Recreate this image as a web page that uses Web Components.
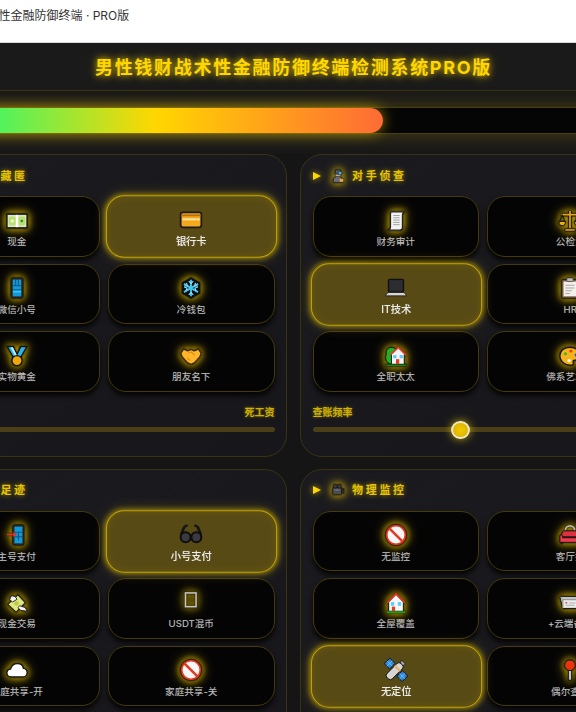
<!DOCTYPE html>
<html lang="zh">
<head>
<meta charset="utf-8">
<title>男性金融防御终端 · PRO版</title>
<style>
html,body{margin:0;padding:0;height:712px;overflow:hidden;background:#161616}
body{font-family:Inter,"Noto Sans CJK SC",sans-serif}
</style>
</head>
<body>
<fin-app>
  <fin-topbar slot="top">男性金融防御终端 · PRO版</fin-topbar>
  <fin-heading>男性钱财战术性金融防御终端检测系统PRO版</fin-heading>
  <fin-progress value="62.2"></fin-progress>
  <fin-grid>
    <fin-card heading="资金藏匿" icon="money">
      <fin-opt icon="cash">现金</fin-opt>
      <fin-opt icon="card" selected>银行卡</fin-opt>
      <fin-opt icon="phone">微信小号</fin-opt>
      <fin-opt icon="snow">冷钱包</fin-opt>
      <fin-opt icon="medal">实物黄金</fin-opt>
      <fin-opt icon="shake">朋友名下</fin-opt>
      <fin-slider slot="foot" label="隐藏比例" value="死工资" pos="0"></fin-slider>
    </fin-card>
    <fin-card heading="对手侦查" icon="spy">
      <fin-opt icon="scroll">财务审计</fin-opt>
      <fin-opt icon="scales">公检法</fin-opt>
      <fin-opt icon="laptop" selected>IT技术</fin-opt>
      <fin-opt icon="clip">HR</fin-opt>
      <fin-opt icon="garden">全职太太</fin-opt>
      <fin-opt icon="palette">佛系艺术家</fin-opt>
      <fin-slider slot="foot" label="查账频率" value="每月" pos="43.3"></fin-slider>
    </fin-card>
    <fin-card heading="消费足迹" icon="money">
      <fin-opt icon="phonein">主号支付</fin-opt>
      <fin-opt icon="shades" selected>小号支付</fin-opt>
      <fin-opt icon="wings">现金交易</fin-opt>
      <fin-opt icon="tofu">USDT混币</fin-opt>
      <fin-opt icon="cloud">家庭共享-开</fin-opt>
      <fin-opt icon="ban">家庭共享-关</fin-opt>
    </fin-card>
    <fin-card heading="物理监控" icon="cam">
      <fin-opt icon="ban">无监控</fin-opt>
      <fin-opt icon="couch">客厅摄</fin-opt>
      <fin-opt icon="house">全屋覆盖</fin-opt>
      <fin-opt icon="server">+云端备份</fin-opt>
      <fin-opt icon="sat" selected>无定位</fin-opt>
      <fin-opt icon="pin">偶尔查岗</fin-opt>
    </fin-card>
  </fin-grid>
</fin-app>
<script>
const ICONS = {
  money:'<rect x="2" y="6" width="20" height="12" fill="#7c6" stroke="#111" stroke-width="1.5"/>',
  cash:'<rect x="1" y="4.5" width="22" height="15" fill="#dfe6c4" stroke="#1a1a1a" stroke-width="1.6"/><rect x="3" y="7" width="7.5" height="10" rx="2" fill="#b8e070"/><rect x="13.500" y="7" width="7.5" height="10" rx="2" fill="#b8e070"/><rect x="10.800" y="5.300" width="2.400" height="13.400" fill="#fff"/><circle cx="6.800" cy="12" r="1.800" fill="#eef6cc"/><circle cx="17.200" cy="12" r="1.400" fill="#1f8a2c"/>',
  card:'<rect x="1" y="4" width="22" height="16" rx="2.400" fill="#f4a81c" stroke="#1a1a1a" stroke-width="1.800"/><rect x="2" y="6.200" width="20" height="2" fill="#b9710f"/><rect x="3" y="10.500" width="15" height="2" fill="#ffe9ae"/><rect x="18.500" y="10.500" width="2.500" height="2" fill="#fff3d0"/>',
  phone:'<rect x="5.500" y="1" width="13" height="22" rx="2" fill="#2e3136" stroke="#111" stroke-width="1"/><rect x="7.500" y="3" width="9" height="18" fill="#0f9bd8"/><path d="M7.500 9.500h9M7.500 14h9M10.500 3v6.500M13.500 3v6.500" stroke="#0a4f78" stroke-width="1"/><rect x="7.500" y="15" width="9" height="2" fill="#35c7f5"/>',
  phonein:'<rect x="7.500" y="1" width="12" height="22" rx="2" fill="#2e3136" stroke="#111" stroke-width="1"/><rect x="9.300" y="3" width="8.500" height="18" fill="#0f9bd8"/><path d="M9.300 9h8.500M9.300 14h8.500M13.500 9v9" stroke="#0a4f78" stroke-width="1"/><path d="M1 11.500h8" stroke="#e0312a" stroke-width="1.800"/><path d="M8 8.500l4 3-4 3z" fill="#e0312a"/>',
  snow:'<path d="M12 .8l9.600 5.600v11.200L12 23.200 2.400 17.600V6.400z" fill="#0b0f14" stroke="#111"/><path d="M12 3v18M4.300 7.500l15.400 9M19.700 7.500l-15.400 9" stroke="#45c8ee" stroke-width="2"/><path d="M9.500 4.500L12 7l2.500-2.500M9.500 19.500L12 17l2.500 2.500M4.500 11l3.200 1-1 3M19.500 11l-3.200 1 1 3M4.600 9.800l3.300-.3-.8-3M19.400 9.800l-3.300-.3.800-3" stroke="#8be4fa" stroke-width="1.200" fill="none"/>',
  medal:'<path d="M.5 1h8l3.500 8 3.500-8h8L16 15H8z" fill="#111"/><path d="M2.500 2.500h5l4.500 9.500 4.500-9.500h5l-6.500 11.500H9z" fill="#2cb4ee"/><path d="M5 2.500h2.500l4.500 9-1.200 2z" fill="#bfeeff"/><circle cx="12" cy="17" r="6.200" fill="#111"/><circle cx="12" cy="17" r="4.800" fill="#f0a808"/>',
  shake:'<path d="M4 4.500l4.500 2L12 5l3.500 1.500L20 4.500l3 4.500-1.500 4-6 6.500-3.500 1.500-3.500-1.500-6-6.500L1 9z" fill="#fdb62c" stroke="#3a2500" stroke-width="1.200" stroke-linejoin="round"/><path d="M9 9l3-1.500 4 3.500M8 14l3 3" stroke="#e68a00" stroke-width="1.200" fill="none"/>',
  spy:'<path d="M8 1.500l8 0 1 7H7z" fill="#5a5a66" stroke="#111"/><rect x="5" y="7.500" width="14" height="2" fill="#44444e"/><rect x="8" y="9.500" width="8" height="4" fill="#c9a38a"/><path d="M4 23v-4c0-4 3-6 8-6s8 2 8 6v4z" fill="#6d6d78" stroke="#111"/><circle cx="15.500" cy="7" r="3.200" fill="#3db6e8" stroke="#222"/><rect x="15" y="17" width="6" height="5" fill="#e9a63a"/>',
  scroll:'<path d="M7 2h14c-1.500 1-2 2-2 3.500V19c0 2-1 3-3 3H3c2-.5 3-2 3-3.500V5c0-2 .3-3 1-3z" fill="#f2f2f2" stroke="#222" stroke-width="1.300" stroke-linejoin="round"/><path d="M9 6h7M9 8.500h7M9 11h7M9 13.500h7M9 16h7" stroke="#9a9a9a" stroke-width="1"/>',
  scales:'<path d="M12 1v19M2.500 5h19" stroke="#111" stroke-width="3.600"/><path d="M12 1v19M2.500 5h19" stroke="#e9a80e" stroke-width="1.800"/><path d="M6.500 20.500h11v2.500h-11z" fill="#f0b010" stroke="#111" stroke-width=".8"/><path d="M3.500 5L.5 13M3.500 5l3 8M20.500 5l-3 8M20.500 5l3 8" fill="none" stroke="#111" stroke-width="1"/><path d="M0 12.500h7c0 3.500-1.500 4.500-3.500 4.500S0 16 0 12.500zM17 12.500h7c0 3.500-1.500 4.500-3.500 4.500S17 16 17 12.500z" fill="#f0b010" stroke="#111"/>',
  laptop:'<rect x="4" y="3" width="16" height="13.500" rx="1.300" fill="#27292e" stroke="#111" stroke-width="1.400"/><rect x="5.500" y="4.500" width="13" height="10.500" fill="#2c2d31"/><path d="M3.500 17h17l3 3.500H.5z" fill="#d8d8d8" stroke="#111" stroke-width=".8"/>',
  clip:'<rect x="3" y="3" width="18" height="20" rx="1" fill="#8d6a50" stroke="#111" stroke-width="1"/><rect x="5" y="5" width="14" height="16" fill="#f4f1e9"/><path d="M7 9h10M7 12h10M7 15h7M7 18h5" stroke="#a8a8a8" stroke-width="1.300"/><rect x="8.500" y="1" width="7" height="4" rx="1" fill="#bbb" stroke="#333" stroke-width=".7"/>',
  garden:'<path d="M8 2.500C3 2.500 .5 6 1.500 10-.5 14 1 20 7 21h5V4z" fill="#22b028" stroke="#111"/><path d="M6 10.500L14.500 2.500l8 8H21v10.500H7V10.500z" fill="#f4f4f4" stroke="#111" stroke-linejoin="round"/><path d="M5.500 11L14.500 2.500l8.500 8.500" fill="none" stroke="#e53a24" stroke-width="1.800"/><rect x="9" y="11" width="3.500" height="3.500" fill="#58d0f8"/><rect x="16" y="11" width="3.500" height="3.500" fill="#58d0f8"/><rect x="12" y="15.500" width="3.500" height="5.500" fill="#e53a24"/><rect x="1" y="21" width="22" height="2" fill="#1a9e20" stroke="#111" stroke-width=".5"/>',
  palette:'<path d="M12 2.500c6 0 11 3.500 11 8 0 4-2 6-5.500 6-2.500 0-2.500 1.500-2 3 .6 2-1 2.500-3.500 2.500C7 22 1 18 1 11.500 1 6 6 2.500 12 2.500z" fill="#f6b21b" stroke="#111" stroke-width="1.300"/><circle cx="7" cy="9.500" r="1.700" fill="#39b52b"/><circle cx="13" cy="6.500" r="1.700" fill="#e8401f"/><circle cx="19" cy="11" r="2" fill="#1e58e0"/><circle cx="11" cy="17" r="1.800" fill="#fff"/>',
  shades:'<path d="M5 3L1.500 12M19 3l3.500 9" stroke="#161616" stroke-width="3" fill="none"/><path d="M5 3l3.500-1M19 3l-3.500-1" stroke="#161616" stroke-width="2.600"/><path d="M10 13h4" stroke="#161616" stroke-width="2.600"/><circle cx="6.300" cy="14.500" r="5.300" fill="#3a3a3e" stroke="#0e0e0e" stroke-width="2.200"/><circle cx="17.700" cy="14.500" r="5.300" fill="#3a3a3e" stroke="#0e0e0e" stroke-width="2.200"/>',
  wings:'<path d="M2 13.500L13 3l8 8.500L11 22z" fill="#dfe87a" stroke="#222" stroke-width="1.200" stroke-linejoin="round"/><path d="M6 4l4 1 2 3-5 3-3-3zM15 15l6 2 2 4-7-1-3-3z" fill="#f4f4f4" stroke="#222" stroke-width="1"/><circle cx="11.500" cy="12.500" r="2.500" fill="#b7c94e"/>',
  tofu:'<rect x="6" y="1" width="11.500" height="15" fill="none" stroke="#c4c4c4" stroke-width="1.700"/>',
  cloud:'<path d="M6 19.500c-3 0-5-2-5-4.300 0-2.400 1.700-4 4-4.200C6 7.500 9 5 12.500 5c3.400 0 6 2.200 6.500 5.400 2.500.3 4 2.300 4 4.500 0 2.500-2 4.600-5 4.600z" fill="#fff" stroke="#111" stroke-width="1.300"/>',
  ban:'<circle cx="12" cy="12" r="10.400" fill="#f6f6f6" stroke="#e23a22" stroke-width="2.400"/><circle cx="12" cy="12" r="11.600" fill="none" stroke="#111" stroke-width=".8"/><path d="M5 5l14 14" stroke="#e23a22" stroke-width="2.800"/>',
  cam:'<rect x="3" y="8" width="15" height="12" rx="1.500" fill="#4b4b50" stroke="#111"/><circle cx="7.500" cy="5.500" r="3.500" fill="#3a3a3e" stroke="#111"/><circle cx="14.500" cy="5.500" r="3.500" fill="#3a3a3e" stroke="#111"/><path d="M18 11l4-2v9l-4-2z" fill="#333" stroke="#111"/><rect x="6" y="11" width="9" height="2" fill="#77777d"/>',
  couch:'<path d="M7 7a5 5 0 0 1 10 0" fill="none" stroke="#b8b8b8" stroke-width="1.800"/><path d="M3 12c0-3 1-4.500 3-4.500h12c2 0 3 1.500 3 4.500v2H3z" fill="#e0303f" stroke="#111" stroke-width="1"/><path d="M1 12.500c1.500-1 3-.5 3 1.500v1h16v-1c0-2 1.500-2.500 3-1.500V20H1z" fill="#ee3c4e" stroke="#111" stroke-width="1"/><path d="M3 20v2M21 20v2" stroke="#111" stroke-width="1.500"/>',
  house:'<path d="M4 11L12 2.500 20 11v10H4z" fill="#f6f6f6" stroke="#111" stroke-linejoin="round"/><path d="M2.500 11.500L12 2l9.500 9.500" fill="none" stroke="#e03a24" stroke-width="1.900"/><rect x="6.500" y="11" width="3.500" height="4" fill="#58d0f8"/><rect x="14" y="11" width="3.500" height="4" fill="#58d0f8"/><rect x="7.500" y="16" width="3.500" height="5" fill="#e03a24"/><rect x="2" y="21" width="20" height="2" fill="#1a9e20"/>',
  server:'<path d="M1 5h20l2 3v10H4z" fill="#d0d0d0" stroke="#111" stroke-linejoin="round"/><path d="M1 5l3 3h19M4 8v10" fill="none" stroke="#888" stroke-width="1"/><rect x="5.500" y="9.500" width="16" height="7" fill="#ececec"/><rect x="7" y="11" width="2" height="1.500" fill="#e03a24"/><path d="M11 12h7M7 14.500h10" stroke="#aaa" stroke-width="1"/>',
  sat:'<g transform="rotate(-45 12 12)"><rect x="7.800" y="-1.500" width="8.400" height="8" fill="#2c86dc" stroke="#111"/><path d="M12-1.500v8M7.800 2.500h8.400" stroke="#8cc8f4" stroke-width=".8"/><rect x="7.800" y="17.500" width="8.400" height="8" fill="#2c86dc" stroke="#111"/><path d="M12 17.500v8M7.800 21.500h8.400" stroke="#8cc8f4" stroke-width=".8"/><rect x="-.5" y="8" width="21" height="8" rx="3" fill="#d6d6d6" stroke="#111"/><rect x="13" y="8" width="2.500" height="8" fill="#e8b070"/><path d="M20.500 10l3-1v6l-3-1z" fill="#aaa" stroke="#111" stroke-width=".7"/></g>',
  pin:'<rect x="10.500" y="10" width="3" height="13" fill="#c2c2c2" stroke="#111" stroke-width=".8"/><circle cx="12" cy="6.800" r="5.800" fill="#e8350f" stroke="#111"/>'
};

function def(name, css, html){
  customElements.define(name, class extends HTMLElement{
    constructor(){
      super();
      const r = this.attachShadow({mode:'open'});
      r.innerHTML = '<style>'+css+'</style>'+(typeof html==='function'?html(this):html);
    }
  });
}

def('fin-icon', `
  :host{display:block;width:var(--icon,22px);height:var(--icon,22px);filter:drop-shadow(0 0 1px rgba(0,0,0,.9)) drop-shadow(0 0 3px rgba(255,215,0,.85)) drop-shadow(0 0 6px rgba(255,215,0,.45))}
  svg{display:block;width:100%;height:100%;overflow:visible}
`, el => '<svg viewBox="0 0 24 24" aria-hidden="true">'+(ICONS[el.getAttribute('name')]||'')+'</svg>');

def('fin-app', `
  :host{display:block;width:745px;margin-left:-79px;background:#151515;min-height:712px}
  main{display:flex;flex-direction:column}
`, '<slot name="top"></slot><main><slot></slot></main>');

def('fin-topbar', `
  :host{display:block;box-sizing:border-box;height:43px;background:#fff;border-bottom:1px solid #d9d9d9;padding:8px 0 0 65.500px;font:12px/15px Inter,"Noto Sans CJK SC",sans-serif;color:#333}
`, '<slot></slot>');

def('fin-heading', `
  :host{display:block;box-sizing:border-box;height:48px;background:#1a1a1a;border-bottom:1px solid #3a3110;text-align:center;padding-top:11px;
    font:700 18px/28px Inter,"Noto Sans CJK SC",sans-serif;letter-spacing:1.700px;color:#ffd700;text-shadow:0 0 6px rgba(255,215,0,.8),0 0 12px rgba(255,215,0,.4)}
`, '<slot></slot>');

def('fin-progress', `
  :host{display:block;padding:15.500px 6px 20.500px;background:#181818}
  .track{height:27px;background:#050505;box-shadow:0 0 20px rgba(255,215,0,.22);border-top:1px solid #4a3d0a;border-bottom:1px solid #4a3d0a;box-sizing:border-box}
  .fill{height:100%;border-radius:13px;background:linear-gradient(90deg,#00ff88,#ffd700 50%,#ff6b35);box-shadow:0 0 14px rgba(255,215,0,.6)}
`, el => '<div class="track"><div class="fill" style="width:'+el.getAttribute('value')+'%"></div></div>');

def('fin-grid', `
  :host{display:grid;grid-template-columns:366px 366px;gap:12px 13px;align-items:start}
`, '<slot></slot>');

def('fin-card', `
  :host{display:block;box-sizing:border-box;border:1px solid #3a3212;border-radius:22px;padding:0 11.500px;background:linear-gradient(145deg,#1b1b1f,#17171b);min-height:302.500px}
  header{display:flex;align-items:center;height:41px;color:#e8c400;font:700 11px/14px Inter,"Noto Sans CJK SC",sans-serif;letter-spacing:2.700px;text-shadow:0 0 5px rgba(255,215,0,.6);--icon:14px}
  .arrow{width:0;height:0;border-left:8px solid #ffd700;border-top:4.500px solid transparent;border-bottom:4.500px solid transparent;filter:drop-shadow(0 0 3px rgba(255,215,0,.8));margin-right:10px;margin-left:.5px}
  fin-icon{margin-right:7px}
  .opts{display:grid;grid-template-columns:166.500px 166.500px;gap:7px 8px}
`, el => '<header><i class="arrow"></i><fin-icon name="'+el.getAttribute('icon')+'"></fin-icon><span>'+el.getAttribute('heading')+'</span></header><div class="opts"><slot></slot></div><slot name="foot"></slot>');

def('fin-opt', `
  :host{display:flex;flex-direction:column;align-items:center;box-sizing:border-box;height:60.500px;padding-top:12.500px;gap:3.500px;border:1px solid #463a0a;border-radius:18px;
    background:#040405;box-shadow:0 4px 5px rgba(0,0,0,.8);color:#bdbdbd;font:400 9.600px/13px Inter,"Noto Sans CJK SC",sans-serif;text-shadow:0 0 1px rgba(255,255,255,.25)}
  :host([selected]){background:#574a14;border:1.500px solid #c2a306;padding-top:12px;color:#ececec;font-weight:500;font-size:10px;transform:scale(1.025);box-shadow:0 0 5px 1px rgba(255,215,0,.45),0 0 14px rgba(255,215,0,.28),inset 0 0 8px rgba(255,215,0,.12)}
  :host([selected]) fin-icon{filter:none}
  span{white-space:nowrap}
`, el => '<fin-icon name="'+el.getAttribute('icon')+'"></fin-icon><span><slot></slot></span>');

def('fin-slider', `
  :host{display:block;margin-top:13.500px;color:#d0b000;font:700 10px/14px Inter,"Noto Sans CJK SC",sans-serif;text-shadow:0 0 3px rgba(255,215,0,.45)}
  .row{display:flex;justify-content:space-between}
  .track{position:relative;height:5px;border-radius:3px;background:#4a3f16;margin-top:8px}
  .thumb{position:absolute;top:50%;width:14.500px;height:14.500px;margin:-9px 0 0 -9px;border:2px solid #eee8c8;border-radius:50%;background:radial-gradient(circle,#f2c900,#d9ae00);box-shadow:0 0 9px rgba(255,215,0,.75)}
`, el => '<div class="row"><span>'+el.getAttribute('label')+'</span><span>'+el.getAttribute('value')+'</span></div><div class="track"><div class="thumb" style="left:'+el.getAttribute('pos')+'%"></div></div>');
</script>
</body>
</html>
